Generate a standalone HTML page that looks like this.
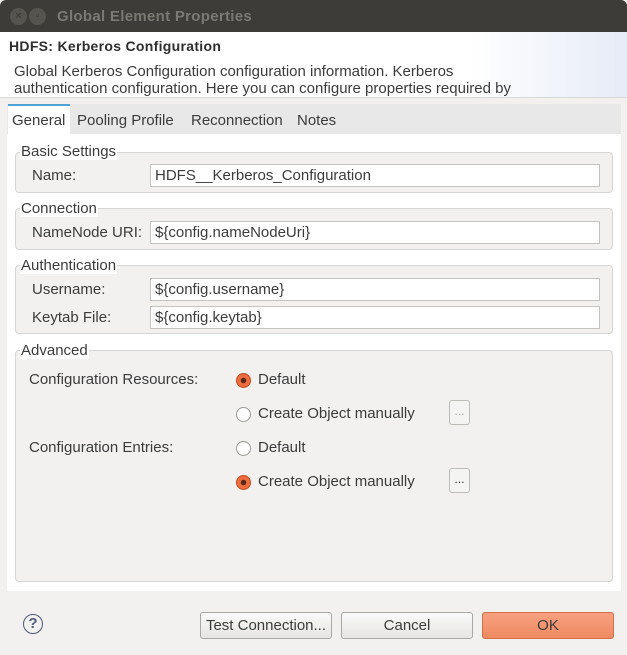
<!DOCTYPE html>
<html><head><meta charset="utf-8"><style>
*{box-sizing:border-box;margin:0;padding:0}
body{width:627px;height:655px;overflow:hidden;background:#f2f1f0;font-family:"Liberation Sans",sans-serif;font-size:15px;color:#3c3c3c;position:relative}
.a{position:absolute;white-space:nowrap}
.title{left:0;top:0;width:627px;height:32px;background:#3d3c38;border-radius:6px 6px 0 0}
.wb{top:8px;width:17px;height:17px;border-radius:50%;background:#55544f;color:#3d3c38;font-size:11px;text-align:center;line-height:17px;font-weight:bold}
.hdr{left:0;top:32px;width:627px;height:66px;background:linear-gradient(90deg,#fff 75%,#e6ebf7)}
.tabs{left:7px;top:104px;width:614px;height:30px;background:#e8e8e8}
.content{left:7px;top:134px;width:614px;height:457px;background:#fff}
.grp{left:15px;width:598px;border:1px solid #d6d6d6;border-radius:4px;background:#f2f1f0}
.gl{left:20px;background:#fff;padding:0 1px;color:#3c3c3c}
.inp{left:150px;width:450px;height:23px;border:1px solid #c4c4c0;background:#fff;padding:2px 4px;line-height:18px}
.lbl{left:32px}
.rad{width:15px;height:15px;border-radius:50%;border:1px solid #9a9a96;background:#fff}
.rad.on{border:1px solid #c24a1e;background:radial-gradient(circle,#5a2a18 0 2.5px,#ef6c3e 3px)}
.dots{width:21px;height:25px;border:1px solid #bdbdb8;border-radius:3px;background:#f4f4f3;text-align:center;line-height:20px;font-size:12px}
.btn{top:612px;height:27px;border:1px solid #a8a8a4;border-radius:3px;background:linear-gradient(#fafafa,#e6e5e3);text-align:center;line-height:25px}
</style></head><body>
<div class="a title"></div>
<div class="a wb" style="left:10px">×</div>
<div class="a wb" style="left:29px">▫</div>
<div class="a" style="left:57px;top:8px;color:#7a7974;font-weight:bold;font-size:15px;letter-spacing:0.3px">Global Element Properties</div>
<div class="a hdr"></div>
<div class="a" style="left:9px;top:38px;font-weight:bold;font-size:14px;color:#2e2e2e;letter-spacing:0.3px">HDFS: Kerberos Configuration</div>
<div class="a" style="left:14px;top:63px;line-height:17px;color:#3c3c3c">Global Kerberos Configuration configuration information. Kerberos<br>authentication configuration. Here you can configure properties required by</div>
<div class="a" style="left:0;top:97px;width:627px;height:1px;background:#d8d8d6"></div>
<div class="a tabs"></div>
<div class="a" style="left:8px;top:104px;width:62px;height:30px;background:#fff;border-top:2px solid #4ea2d8"></div>
<div class="a" style="left:12px;top:112px">General</div>
<div class="a" style="left:77px;top:112px">Pooling Profile</div>
<div class="a" style="left:191px;top:112px">Reconnection</div>
<div class="a" style="left:297px;top:112px">Notes</div>
<div class="a content"></div>

<div class="a grp" style="top:152px;height:41px"></div>
<div class="a gl" style="top:143px">Basic Settings</div>
<div class="a lbl" style="top:167px">Name:</div>
<div class="a inp" style="top:164px">HDFS__Kerberos_Configuration</div>

<div class="a grp" style="top:208px;height:42px"></div>
<div class="a gl" style="top:200px">Connection</div>
<div class="a lbl" style="top:224px">NameNode URI:</div>
<div class="a inp" style="top:221px">${config.nameNodeUri}</div>

<div class="a grp" style="top:265px;height:69px"></div>
<div class="a gl" style="top:257px">Authentication</div>
<div class="a lbl" style="top:281px">Username:</div>
<div class="a inp" style="top:278px">${config.username}</div>
<div class="a lbl" style="top:309px">Keytab File:</div>
<div class="a inp" style="top:306px">${config.keytab}</div>

<div class="a grp" style="top:350px;height:232px"></div>
<div class="a gl" style="top:342px">Advanced</div>
<div class="a" style="left:29px;top:371px">Configuration Resources:</div>
<div class="a rad on" style="left:236px;top:373px"></div>
<div class="a" style="left:258px;top:371px">Default</div>
<div class="a rad" style="left:236px;top:407px"></div>
<div class="a" style="left:258px;top:405px">Create Object manually</div>
<div class="a dots" style="left:449px;top:400px;color:#aaa">...</div>
<div class="a" style="left:29px;top:439px">Configuration Entries:</div>
<div class="a rad" style="left:236px;top:441px"></div>
<div class="a" style="left:258px;top:439px">Default</div>
<div class="a rad on" style="left:236px;top:475px"></div>
<div class="a" style="left:258px;top:473px">Create Object manually</div>
<div class="a dots" style="left:449px;top:468px;color:#333">...</div>

<div class="a" style="left:23px;top:614px;width:20px;height:20px;border-radius:50%;border:1.5px solid #4d5a78;color:#4d5a78;font-weight:bold;text-align:center;line-height:17px;font-size:15px">?</div>
<div class="a btn" style="left:200px;width:132px">Test Connection...</div>
<div class="a btn" style="left:341px;width:132px">Cancel</div>
<div class="a btn" style="left:482px;width:132px;background:linear-gradient(#f8a080,#ef8a62);border-color:#d2704c">OK</div>
</body></html>
